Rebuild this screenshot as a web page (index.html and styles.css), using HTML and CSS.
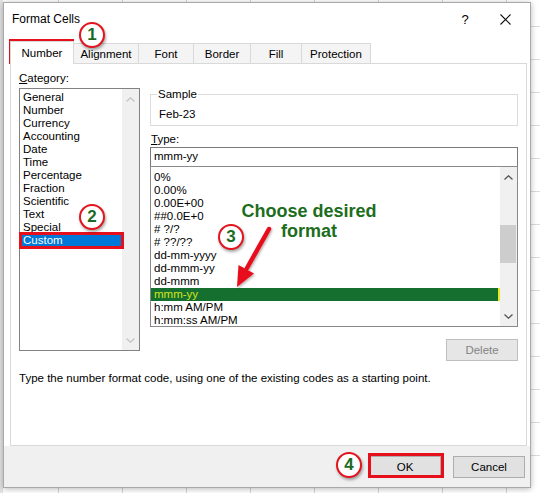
FILE: index.html
```html
<!DOCTYPE html>
<html>
<head>
<meta charset="utf-8">
<link rel="stylesheet" href="styles.css">
</head>
<body>
<div class="dialog">
  <div class="titlebar">
    <span class="title">Format Cells</span>
    <span class="help">?</span>
    <span class="close"><svg width="11" height="11" viewBox="0 0 11 11"><path d="M0.5 0.5L10.5 10.5M10.5 0.5L0.5 10.5" stroke="#111" stroke-width="1.1" fill="none"/></svg></span>
  </div>
  <div class="tabs">
    <div class="tab active t-num">Number</div>
    <div class="tab t-ali">Alignment</div>
    <div class="tab t-font">Font</div>
    <div class="tab t-bor">Border</div>
    <div class="tab t-fill">Fill</div>
    <div class="tab t-pro">Protection</div>
  </div>
  <div class="panel">
    <div class="cols">
      <div class="leftcol">
        <div class="label"><u>C</u>ategory:</div>
        <div class="listbox cat">
          <div class="items">
            <div class="item">General</div>
            <div class="item">Number</div>
            <div class="item">Currency</div>
            <div class="item">Accounting</div>
            <div class="item">Date</div>
            <div class="item">Time</div>
            <div class="item">Percentage</div>
            <div class="item">Fraction</div>
            <div class="item">Scientific</div>
            <div class="item">Text</div>
            <div class="item">Special</div>
            <div class="item sel">Custom</div>
          </div>
          <div class="vscroll">
            <div class="arrow"><svg width="9" height="5" viewBox="0 0 9 5"><path d="M0.5 4.5L4.5 0.8L8.5 4.5" stroke="#c4c4c4" stroke-width="1.3" fill="none"/></svg></div>
            <div class="track"></div>
            <div class="arrow"><svg width="9" height="5" viewBox="0 0 9 5"><path d="M0.5 0.5L4.5 4.2L8.5 0.5" stroke="#c4c4c4" stroke-width="1.3" fill="none"/></svg></div>
          </div>
        </div>
      </div>
      <div class="rightcol">
        <fieldset class="sample">
          <legend>Sample</legend>
          <div class="sample-val">Feb-23</div>
        </fieldset>
        <div class="label type-label"><u>T</u>ype:</div>
        <div class="input">mmm-yy</div>
        <div class="listbox typ">
          <div class="items">
            <div class="item">0%</div>
            <div class="item">0.00%</div>
            <div class="item">0.00E+00</div>
            <div class="item">##0.0E+0</div>
            <div class="item"># ?/?</div>
            <div class="item"># ??/??</div>
            <div class="item">dd-mm-yyyy</div>
            <div class="item">dd-mmm-yy</div>
            <div class="item">dd-mmm</div>
            <div class="item sel">mmm-yy</div>
            <div class="item">h:mm AM/PM</div>
            <div class="item">h:mm:ss AM/PM</div>
          </div>
          <div class="vscroll">
            <div class="arrow"><svg width="9" height="5" viewBox="0 0 9 5"><path d="M0.5 4.5L4.5 0.8L8.5 4.5" stroke="#555" stroke-width="1.3" fill="none"/></svg></div>
            <div class="track"><div class="thumb"></div></div>
            <div class="arrow"><svg width="9" height="5" viewBox="0 0 9 5"><path d="M0.5 0.5L4.5 4.2L8.5 0.5" stroke="#555" stroke-width="1.3" fill="none"/></svg></div>
          </div>
        </div>
        <div class="btnrow"><button class="btn disabled">Delete</button></div>
      </div>
    </div>
    <div class="desc">Type the number format code, using one of the existing codes as a starting point.</div>
  </div>
  <div class="footer">
    <button class="btn">OK</button>
    <button class="btn">Cancel</button>
  </div>
</div>

<div class="rbox b1"></div>
<div class="rbox b2"></div>
<div class="rbox b3"></div>
<div class="ring r1">1</div>
<div class="ring r2">2</div>
<div class="ring r3">3</div>
<div class="ring r4">4</div>
<div class="hint">Choose desired<br>format</div>
<svg class="arrowsvg" width="540" height="493" viewBox="0 0 540 493">
  <defs>
    <filter id="sh" x="-20%" y="-20%" width="140%" height="140%">
      <feDropShadow dx="1" dy="1.5" stdDeviation="1" flood-color="#000" flood-opacity="0.3"/>
    </filter>
  </defs>
  <g filter="url(#sh)">
    <line x1="269" y1="229" x2="247" y2="268" stroke="#e8101a" stroke-width="4.5" stroke-linecap="round"/>
    <polygon points="237,287 238.5,265 254,273.5" fill="#e8101a"/>
  </g>
</svg>
</body>
</html>
```
FILE: styles.css
```css
* { box-sizing: border-box; }
html, body { margin: 0; padding: 0; }
body {
  width: 540px;
  height: 493px;
  overflow: hidden;
  position: relative;
  font-family: "Liberation Sans", Arial, sans-serif;
  font-size: 11.5px;
  color: #000;
  background:
    linear-gradient(90deg, #e2e2e2 0 3px, transparent 3px),
    repeating-linear-gradient(90deg, transparent 0 63px, #d4d4d4 63px 64px),
    repeating-linear-gradient(180deg, transparent 0 32px, #dadada 32px 33px),
    #ffffff;
  background-position: 0 0, -5px 0, 0 -6px, 0 0;
}

.dialog {
  margin: 2px 0 0 3px;
  width: 528px;
  height: 486px;
  background: #fff;
  border: 1px solid #a9a9a9;
  box-shadow: 0 1px 6px rgba(0, 0, 0, 0.28);
  display: flex;
  flex-direction: column;
}

.titlebar {
  height: 32px;
  display: flex;
  align-items: center;
  padding-left: 8px;
}
.title { font-size: 12px; flex: 1; }
.help { width: 20px; text-align: center; font-size: 13px; margin-right: 8px; }
.close { width: 44px; margin-right: 3px; display: flex; justify-content: center; align-items: center; }

.tabs {
  height: 22px;
  margin-top: 6px;
  padding-left: 6px;
  display: flex;
  align-items: flex-end;
}
.tab {
  height: 20px;
  border: 1px solid #d9d9d9;
  border-bottom: none;
  background: #f4f4f4;
  margin-left: -1px;
  display: flex;
  align-items: center;
  justify-content: center;
}
.tab.active {
  height: 23px;
  margin-left: 0;
  margin-bottom: -1px;
  background: #fff;
  position: relative;
  z-index: 1;
  padding-bottom: 1px;
}
.t-num { width: 64px; }
.t-ali { width: 66px; }
.t-font { width: 56px; }
.t-bor { width: 58px; }
.t-fill { width: 52px; }
.t-pro { width: 70px; }

.panel {
  flex: 1;
  margin: 0 3px 0 6px;
  border: 1px solid #d9d9d9;
  padding: 6px 8px 0 8px;
}
.cols { display: flex; gap: 10px; }
.leftcol { width: 121px; }
.rightcol { width: 368px; }
.label { height: 16px; line-height: 16px; }

.listbox {
  border: 1px solid #828282;
  display: flex;
  background: #fff;
}
.listbox.cat { height: 263px; margin-top: 2px; }
.listbox.typ { height: 161px; border-color: #8a8a8a; }
.items { flex: 1; min-width: 0; }
.cat .items { padding: 2px 1px 0 1px; }
.cat .item { height: 13px; line-height: 13px; padding-left: 2px; white-space: nowrap; }
.cat .item.sel { background: #0078d7; color: #fff; }
.typ .items { padding-top: 4px; }
.typ .item { height: 13px; line-height: 13px; padding-left: 3px; white-space: nowrap; }
.typ .item.sel {
  background: #157030;
  color: #d6e21a;
  border-right: 2px solid #e6ea1e;
}

.vscroll {
  width: 17px;
  background: #f0f0f0;
  display: flex;
  flex-direction: column;
}
.arrow { height: 20px; display: flex; align-items: center; justify-content: center; }
.track { flex: 1; }
.thumb { width: 16px; height: 38px; margin-top: 38px; background: #cdcdcd; }

.sample {
  margin: 17px 0 0 0;
  padding: 5px 0 2px 8px;
  border: 1px solid #dcdcdc;
  height: 39px;
}
.sample legend {
  padding: 0 1px;
  margin-left: -2px;
  line-height: 14px;
  height: 14px;
}
.sample-val { height: 16px; line-height: 16px; }
.type-label { margin-top: 5px; padding-left: 1px; }
.input {
  height: 19px;
  border: 1px solid #7a7a7a;
  border-bottom: none;
  line-height: 17px;
  padding-left: 3px;
}
.btnrow { display: flex; justify-content: flex-end; margin-top: 12px; }

.btn {
  height: 22px;
  width: 72px;
  border: 1px solid #adadad;
  background: #e1e1e1;
  font-family: "Liberation Sans", Arial, sans-serif;
  font-size: 11.5px;
  color: #000;
  padding: 0;
}
.btn.disabled { color: #838383; border-color: #bfbfbf; background: #e6e6e6; }

.desc { margin-top: 9px; height: 16px; line-height: 16px; padding-left: 0; }

.footer {
  height: 41px;
  background: #f0f0f0;
  display: flex;
  justify-content: flex-end;
  align-items: flex-start;
  gap: 12px;
  padding: 10px 5px 0 0;
}

/* annotations */
.rbox { position: absolute; border: 3px solid #e5101b; }
.b1 { left: 9px; top: 39px; width: 65px; height: 25px; }
.b2 { left: 19px; top: 232px; width: 105px; height: 17px; }
.b3 { left: 368px; top: 453px; width: 76px; height: 25px; }

.ring {
  position: absolute;
  width: 26px;
  height: 26px;
  border: 2.5px solid #e3141d;
  border-radius: 50%;
  background: #fff;
  box-shadow: 1px 2px 3px rgba(0, 0, 0, 0.35);
  display: flex;
  align-items: center;
  justify-content: center;
  font-family: "Liberation Sans", Arial, sans-serif;
  font-weight: bold;
  font-size: 17px;
  color: #1b6b1f;
}
.r1 { left: 79px; top: 22px; }
.r2 { left: 79px; top: 204px; }
.r3 { left: 218px; top: 224px; }
.r4 { left: 336px; top: 452px; }

.hint {
  position: absolute;
  left: 229px;
  top: 201px;
  width: 160px;
  text-align: center;
  font-family: "Liberation Sans", Arial, sans-serif;
  font-weight: bold;
  font-size: 18px;
  line-height: 20px;
  color: #1c6d1c;
}
.arrowsvg { position: absolute; left: 0; top: 0; pointer-events: none; }
```
